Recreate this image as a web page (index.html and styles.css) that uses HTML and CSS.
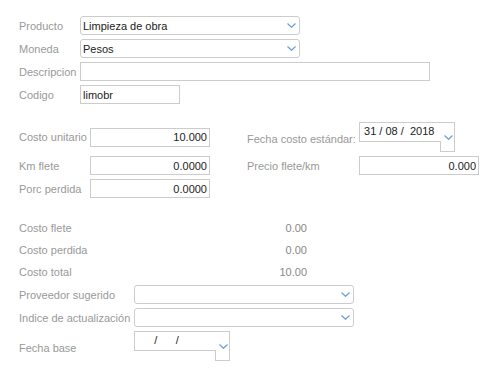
FILE: index.html
```html
<!DOCTYPE HTML><html>
<head>
  <meta name="viewport" content="width=device-width, initial-scale=1">
  <title>Costo de producto</title>
  <link rel="stylesheet" href="styles.css">
</head>
<body>
<div class="form">
  <!-- datos del producto -->
  <div class="sec1">
    <div class="row"><span class="lbl w61">Producto</span>
      <div class="select w220"><span>Limpieza de obra</span>
        <svg class="chev" width="9" height="5" viewBox="0 0 9 5"><path d="M0.5 0.5 L4.5 4.3 L8.5 0.5" fill="none" stroke="#6d9fd6" stroke-width="1.2"/></svg>
      </div>
    </div>
    <div class="row"><span class="lbl w61">Moneda</span>
      <div class="select w220"><span>Pesos</span>
        <svg class="chev" width="9" height="5" viewBox="0 0 9 5"><path d="M0.5 0.5 L4.5 4.3 L8.5 0.5" fill="none" stroke="#6d9fd6" stroke-width="1.2"/></svg>
      </div>
    </div>
    <div class="row"><span class="lbl w61">Descripcion</span><input class="inp w350" type="text" value=""></div>
    <div class="row"><span class="lbl w61">Codigo</span><input class="inp w100" type="text" value="limobr"></div>
  </div>

  <!-- costos -->
  <div class="sec2">
    <div class="row tall">
      <div class="cell"><span class="lbl w71">Costo unitario</span><input class="inp num w120" type="text" value="10.000"></div>
      <div class="cell"><span class="lbl w112 low">Fecha costo estándar:</span>
        <div class="date">
          <div class="date-field w82"> 31 / 08 /  2018</div>
          <div class="date-btn"><svg width="9" height="5" viewBox="0 0 9 5"><path d="M0.5 0.5 L4.5 4.3 L8.5 0.5" fill="none" stroke="#6d9fd6" stroke-width="1.2"/></svg></div>
        </div>
      </div>
    </div>
    <div class="row">
      <div class="cell"><span class="lbl w71">Km flete</span><input class="inp num w120" type="text" value="0.0000"></div>
      <div class="cell"><span class="lbl w112">Precio flete/km</span><input class="inp num w120" type="text" value="0.000"></div>
    </div>
    <div class="row">
      <div class="cell"><span class="lbl w71">Porc perdida</span><input class="inp num w120" type="text" value="0.0000"></div>
    </div>
  </div>

  <!-- totales -->
  <div class="sec3">
    <div class="trow"><span class="lbl w115">Costo flete</span><span class="val">0.00</span></div>
    <div class="trow"><span class="lbl w115">Costo perdida</span><span class="val">0.00</span></div>
    <div class="trow"><span class="lbl w115">Costo total</span><span class="val">10.00</span></div>
  </div>

  <div class="sec4">
    <div class="row"><span class="lbl w115">Proveedor sugerido</span>
      <div class="select w220"><span></span>
        <svg class="chev" width="9" height="5" viewBox="0 0 9 5"><path d="M0.5 0.5 L4.5 4.3 L8.5 0.5" fill="none" stroke="#6d9fd6" stroke-width="1.2"/></svg>
      </div>
    </div>
    <div class="row"><span class="lbl w115">Indice de actualización</span>
      <div class="select w220"><span></span>
        <svg class="chev" width="9" height="5" viewBox="0 0 9 5"><path d="M0.5 0.5 L4.5 4.3 L8.5 0.5" fill="none" stroke="#6d9fd6" stroke-width="1.2"/></svg>
      </div>
    </div>
    <div class="row tall"><span class="lbl w115 low">Fecha base</span>
      <div class="date">
        <div class="date-field w82">      /      /</div>
        <div class="date-btn"><svg width="9" height="5" viewBox="0 0 9 5"><path d="M0.5 0.5 L4.5 4.3 L8.5 0.5" fill="none" stroke="#6d9fd6" stroke-width="1.2"/></svg></div>
      </div>
    </div>
  </div>
</div>
</body>
</html>
```

FILE: styles.css
```css
body {margin: 0; background: #fff; font-family: "Liberation Sans", Arial, sans-serif; font-size: 11px; color: #222;}
.form {padding: 16px 0 0 19px;}

.row {display: flex; align-items: center; height: 19px; margin-bottom: 4px;}
.row.tall {height: 30px; margin-bottom: 4px;}

.lbl {color: #999; white-space: nowrap; flex: none;}
.lbl.low {padding-top: 4px;}
.w61 {width: 61px;}
.w71 {width: 71px;}
.w112 {width: 112px;}
.w115 {width: 115px;}
.w82 {width: 82px;}
.w100 {width: 100px;}
.w120 {width: 120px;}
.w220 {width: 220px;}
.w350 {width: 350px;}

.select {display: flex; align-items: center; box-sizing: border-box; height: 19px; border: 1px solid #ccc; border-radius: 3px; padding: 0 3px 0 2px; color: #222;}
.select .chev {margin-left: auto;}

.inp {box-sizing: border-box; height: 19px; border: 1px solid #ccc; border-radius: 0; padding: 0 2px; margin: 0;
  font-family: "Liberation Sans", Arial, sans-serif; font-size: 11px; color: #222; background: #fff; outline: none;}
.inp.num {text-align: right;}

.sec2 {margin-top: 18px;}
.cell {display: flex; align-items: center; width: 228px;}

.date {display: flex; align-items: flex-start; height: 30px;}
.date-field {position: relative; z-index: 1; box-sizing: border-box; height: 20px; margin-right: -1px; padding: 2px 0 0 1px;
  border: 1px solid #ccc; border-right: none; background: #fff; white-space: pre; color: #222;}
.date-btn {box-sizing: border-box; width: 15px; height: 30px; border: 1px solid #ccc; padding: 12px 0 0 3px;}
.date-btn svg {display: block;}

.sec3 {margin-top: 21px;}
.trow {display: flex; align-items: center; height: 18px; margin-bottom: 4px;}
.val {width: 173px; text-align: right; color: #888;}

.sec4 {margin-top: 3px;}
```
